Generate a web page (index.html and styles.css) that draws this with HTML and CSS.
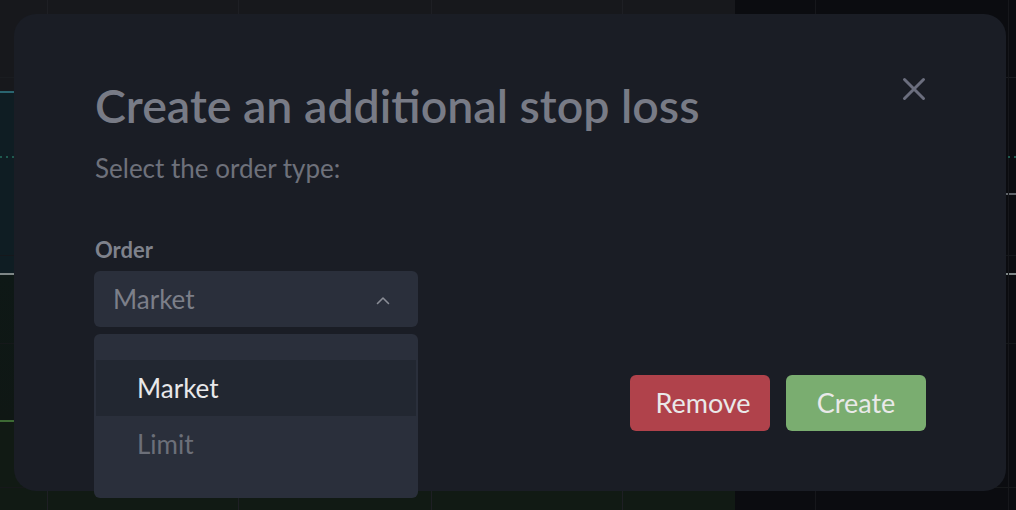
FILE: index.html
```html
<!DOCTYPE html>
<html lang="en">
<head>
<meta charset="utf-8">
<title>Create an additional stop loss</title>
<link rel="stylesheet" href="styles.css">
</head>
<body>
<div class="modal">
  <div class="modal-head">
    <h1 class="title">Create an additional stop loss</h1>
    <button class="close" aria-label="Close">
      <svg width="24" height="24" viewBox="0 0 24 24"><path d="M2.5 2.5 L21.5 21.5 M21.5 2.5 L2.5 21.5" stroke="currentColor" stroke-width="3" stroke-linecap="round" fill="none"/></svg>
    </button>
  </div>
  <p class="subtitle">Select the order type:</p>
  <div class="field">
    <div class="label">Order</div>
    <div class="select">
      <div class="select-box">
        <span class="select-value">Market</span>
        <svg class="chevron" width="14" height="9" viewBox="0 0 14 9"><path d="M1.5 7.5 L7 2 L12.5 7.5" stroke="currentColor" stroke-width="1.6" fill="none" stroke-linecap="round" stroke-linejoin="round"/></svg>
      </div>
      <ul class="menu">
        <li class="menu-item active">Market</li>
        <li class="menu-item">Limit</li>
      </ul>
    </div>
  </div>
  <div class="actions">
    <button class="btn btn-remove">Remove</button>
    <button class="btn btn-create">Create</button>
  </div>
</div>
</body>
</html>
```
FILE: styles.css
```css
* { box-sizing: border-box; }
html, body { margin: 0; }
body {
  width: 1016px;
  height: 510px;
  padding: 14px 10px 19px 14px;
  overflow: hidden;
  font-family: "Lato", "Noto Sans", sans-serif;
  background-color: #0b0c10;
  background-image:
    repeating-linear-gradient(90deg, #1f5a4f 0, #1f5a4f 2px, transparent 2px, transparent 6px),
    linear-gradient(90deg, transparent 47px, #1e1f24 47px, #1e1f24 48px, transparent 48px, transparent 238px, #1e1f24 238px, #1e1f24 239px, transparent 239px, transparent 431px, #1e1f24 431px, #1e1f24 432px, transparent 432px, transparent 622px, #1e1f24 622px, #1e1f24 623px, transparent 623px, transparent 815px, #16171b 815px, #16171b 816px, transparent 816px, transparent 1008px, #16171b 1008px, #16171b 1009px, transparent 1009px),
    linear-gradient(180deg, transparent 77px, #1a1c20 77px, #1a1c20 78px, transparent 78px, transparent 255px, #15181c 255px, #15181c 256px, transparent 256px, transparent 273px, #7e8686 273px, #7e8686 275px, transparent 275px, transparent 343px, #15181a 343px, #15181a 344px, transparent 344px, transparent 487px, #16181a 487px, #16181a 488px, transparent 488px),
    linear-gradient(180deg, transparent 193px, #5f6368 193px, #5f6368 195px, transparent 195px),
    linear-gradient(180deg, #17181c 0, #17181c 91px, #2a6570 91px, #2a6570 93px, #0f1d23 93px, #0f1d23 273px, #0e1816 275px, #0f1714 420px, #3d6a34 420px, #3d6a34 422px, #111a14 422px, #111a14 100%);
  background-size: 100% 2px, 100% 100%, 100% 100%, 281px 100%, 735px 100%;
  background-position: 0 156px, 0 0, 0 0, 735px 0, 0 0;
  background-repeat: no-repeat;
}
.modal {
  position: relative;
  width: 992px;
  background: #1a1d25;
  border-radius: 22px;
  padding: 63px 80px 60px 81px;
}
.modal-head {
  display: flex;
  justify-content: space-between;
  align-items: flex-start;
}
.title {
  margin: 0;
  font-size: 46.5px;
  line-height: 56px;
  font-weight: 600;
  color: #787b86;
}
.close {
  width: 24px;
  height: 24px;
  padding: 0;
  border: 0;
  background: none;
  color: #6b6e7e;
  display: flex;
  cursor: pointer;
}
.subtitle {
  margin: 18px 0 0;
  font-size: 26px;
  line-height: 34px;
  color: #6e717b;
}
.field {
  margin-top: 51px;
}
.label {
  font-size: 22px;
  line-height: 28px;
  font-weight: 700;
  color: #7f828c;
}
.select {
  position: relative;
  width: 324px;
  margin: 7px 0 0 -1px;
}
.select-box {
  height: 56px;
  background: #2a2f3b;
  border-radius: 6px;
  padding: 0 28px 0 19px;
  display: flex;
  align-items: center;
  justify-content: space-between;
}
.select-value {
  font-size: 26px;
  line-height: 56px;
  color: #7c7f89;
}
.chevron { color: #8a8d96; margin-top: 2px; }
.menu {
  position: absolute;
  top: calc(100% + 7px);
  left: 0;
  width: 324px;
  margin: 0;
  padding: 26px 2px;
  list-style: none;
  background: #2a2f3b;
  border-radius: 6px;
  z-index: 2;
}
.menu-item {
  height: 56px;
  padding-left: 41px;
  font-size: 26px;
  line-height: 56px;
  color: #6c6f79;
}
.menu-item.active {
  background: #222731;
  color: #e8e8ea;
}
.actions {
  display: flex;
  justify-content: flex-end;
  gap: 16px;
  margin-top: 48px;
}
.btn {
  width: 140px;
  height: 56px;
  border: 0;
  border-radius: 6px;
  font-family: inherit;
  font-size: 27px;
  line-height: 56px;
  color: #e9e9e9;
  padding: 0;
  cursor: pointer;
}
.btn-remove { background: #b0424b; padding-left: 6px; }
.btn-create { background: #7aad70; }
```
